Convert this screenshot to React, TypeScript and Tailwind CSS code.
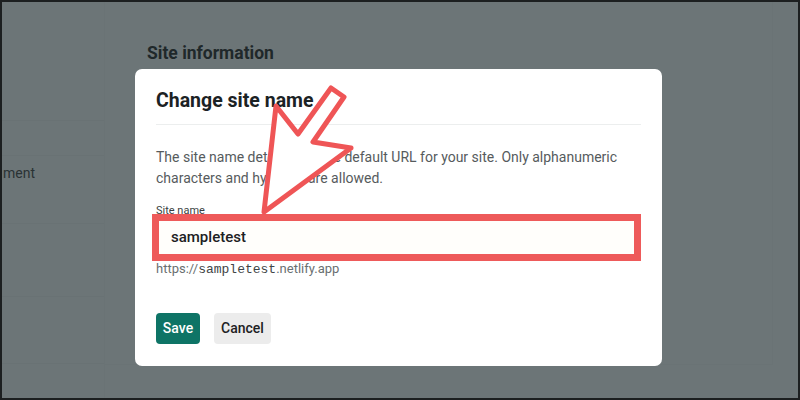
const sidebarRows = [
  { h: 'h-[35px]', label: '' },
  { h: 'h-[68px]', label: 'ment' },
  { h: 'h-[73px]', label: '' },
  { h: 'h-[67px]', label: '' },
];

const ArrowMark = () => (
  <svg className="absolute left-0 top-0 pointer-events-none" width="800" height="400" viewBox="0 0 800 400">
    <polygon
      points="262,210 274,104 296,132 329,86 342,95 311,140 349,146"
      fill="#ffffff"
      stroke="#ef5556"
      strokeWidth="5"
      strokeLinejoin="round"
    />
  </svg>
);

const App = () => {
  return (
    <div
      className="relative flex h-[400px] w-[800px] overflow-hidden border-2 border-[#1c1f20] bg-[#6c7577]"
      style={{ fontFamily: 'Roboto, "Noto Sans", sans-serif' }}
    >
      {/* Dimmed page behind the dialog */}
      <aside className="flex w-[103px] flex-col border-r border-[#6a7375] pt-[118px]">
        {sidebarRows.map((row, i) => (
          <div key={i} className={`${row.h} border-t border-[#697274] text-[14px] text-[#2a3234]`}>
            {row.label && <div className="pl-[1px] pt-[7px] leading-[20px]">{row.label}</div>}
          </div>
        ))}
        <div className="border-t border-[#697274]" />
      </aside>
      <main className="mb-[33px] mr-[25px] flex-1 border-b border-r border-[#6a7375] pl-[42px] pt-[38px]">
        <h2 className="text-[17.5px] font-bold text-[#1f282a]">Site information</h2>
      </main>

      {/* Dialog */}
      <div className="absolute left-[133px] top-[67px] h-[297px] w-[527px] rounded-[7px] bg-white px-[21px] pt-[18px]">
        <h1 className="text-[19.5px] font-bold leading-[28px] text-[#1b2224]">Change site name</h1>
        <div className="mt-[9px] h-px bg-[#eceeee]" />
        <p className="mt-[22px] text-[14px] leading-[21px] text-[#565b5d]">
          The site name determines the default URL for your site. Only alphanumeric characters and hyphens are allowed.
        </p>
        <label className="mt-[15px] block text-[11px] leading-[14px] text-[#3a3f41]">Site name</label>
        <div className="-ml-[4px] -mt-[4px] w-[489px] border-[7px] border-[#ee5a5a] bg-[#fffefb]">
          <div className="flex h-[33px] items-center pl-[12px] text-[15px] font-medium text-[#1d2123]">sampletest</div>
        </div>
        <div className="-mt-[1px] text-[13px] leading-[17px] text-[#6a6f71]">
          https://<span className="font-['Liberation_Mono',monospace] text-[#3f4446]">sampletest</span>.netlify.app
        </div>
        <div className="mt-[35px] flex gap-[14px]">
          <button className="h-[31px] w-[44px] rounded-[4px] bg-[#0e7466] text-[14px] font-medium text-white">Save</button>
          <button className="h-[31px] w-[57px] rounded-[4px] bg-[#ececec] text-[14px] font-medium text-[#1d2123]">Cancel</button>
        </div>
      </div>

      <ArrowMark />
    </div>
  );
};

export default App;
